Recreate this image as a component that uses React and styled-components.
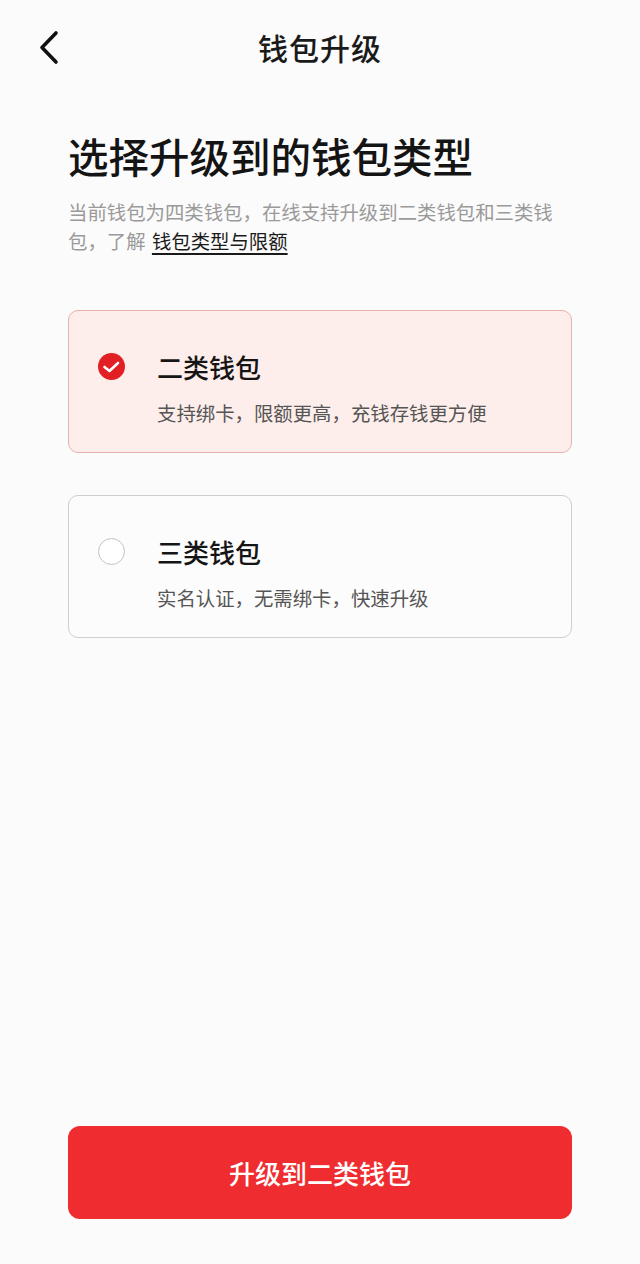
import React from "react";
import styled, { createGlobalStyle } from "styled-components";

const GlobalStyle = createGlobalStyle`
  html, body {
    margin: 0;
    padding: 0;
    background: #fcfbfb;
  }
  body {
    font-family: "Noto Sans CJK SC", "Noto Sans", sans-serif;
  }
`;

const options = [
  { id: 2, title: "二类钱包", desc: "支持绑卡，限额更高，充钱存钱更方便" },
  { id: 3, title: "三类钱包", desc: "实名认证，无需绑卡，快速升级" },
];

function App() {
  const selected = 2;
  return (
    <Root>
      <GlobalStyle />
      <Header>
        <BackButton>
          <svg width="24" height="36" viewBox="0 0 24 36" fill="none">
            <path d="M19 3 L5 17.5 L19 32" stroke="#111" strokeWidth="3.6" strokeLinecap="round" strokeLinejoin="round" />
          </svg>
        </BackButton>
        <HeaderTitle>钱包升级</HeaderTitle>
      </Header>
      <Content>
        <Heading>选择升级到的钱包类型</Heading>
        <Intro>
          当前钱包为四类钱包，在线支持升级到二类钱包和三类钱包，了解 <IntroLink>钱包类型与限额</IntroLink>
        </Intro>
        <OptionList>
          {options.map((o) => (
            <OptionCard key={o.id} $active={o.id === selected}>
              <Radio $active={o.id === selected}>
                {o.id === selected && (
                  <svg width="27" height="27" viewBox="0 0 27 27" fill="none">
                    <path d="M6.5 14 L11.5 18 L20 10" stroke="#fff" strokeWidth="2.6" strokeLinecap="round" strokeLinejoin="round" />
                  </svg>
                )}
              </Radio>
              <OptionText>
                <OptionTitle>{o.title}</OptionTitle>
                <OptionDesc>{o.desc}</OptionDesc>
              </OptionText>
            </OptionCard>
          ))}
        </OptionList>
      </Content>
      <Footer>
        <PrimaryButton>升级到二类钱包</PrimaryButton>
      </Footer>
    </Root>
  );
}

const Root = styled.div`
  display: flex;
  flex-direction: column;
  min-height: 1264px;
  width: 640px;
  background: #fcfbfb;
`;

const Header = styled.div`
  position: relative;
  height: 94px;
  display: flex;
  align-items: center;
  justify-content: center;
`;

const BackButton = styled.div`
  position: absolute;
  left: 37px;
  top: 30px;
  display: flex;
`;

const HeaderTitle = styled.div`
  font-size: 30px;
  font-weight: 500;
  color: #1a1a1a;
  letter-spacing: 1px;
`;

const Content = styled.div`
  display: flex;
  flex-direction: column;
  padding: 36px 68px 0 68px;
`;

const Heading = styled.h1`
  margin: 0;
  font-size: 40.5px;
  line-height: 52px;
  font-weight: 500;
  color: #141414;
`;

const Intro = styled.p`
  margin: 15px 0 0 0;
  font-size: 19.4px;
  line-height: 29px;
  color: #9a9a9a;
`;

const IntroLink = styled.span`
  margin-left: 2px;
  color: #1a1a1a;
  text-decoration: underline;
  text-underline-offset: 4px;
  text-decoration-thickness: 1.5px;
`;

const OptionList = styled.div`
  display: flex;
  flex-direction: column;
  gap: 42px;
  margin-top: 55px;
`;

const OptionCard = styled.div`
  height: 143px;
  box-sizing: border-box;
  border-radius: 10px;
  border: 1.5px solid ${(p) => (p.$active ? "#e5b1ae" : "#cfcdcd")};
  background: ${(p) => (p.$active ? "#fdeeeb" : "#fdfcfc")};
  display: flex;
  align-items: flex-start;
  padding: 41px 0 0 29px;
`;

const Radio = styled.div`
  width: 27px;
  height: 27px;
  box-sizing: border-box;
  border-radius: 50%;
  flex-shrink: 0;
  margin-top: 1px;
  display: flex;
  align-items: center;
  justify-content: center;
  background: ${(p) => (p.$active ? "#e11f24" : "#ffffff")};
  border: ${(p) => (p.$active ? "none" : "1.5px solid #c4c2c2")};
`;

const OptionText = styled.div`
  display: flex;
  flex-direction: column;
  margin-left: 32px;
`;

const OptionTitle = styled.div`
  font-size: 26px;
  line-height: 30px;
  font-weight: 500;
  color: #151515;
`;

const OptionDesc = styled.div`
  margin-top: 18px;
  font-size: 19.4px;
  line-height: 26px;
  color: #555;
`;

const Footer = styled.div`
  margin-top: auto;
  padding: 0 68px 45px 68px;
`;

const PrimaryButton = styled.button`
  display: block;
  width: 100%;
  height: 93px;
  border: none;
  border-radius: 12px;
  background: #ef2d31;
  color: #fff;
  font-family: "Noto Sans CJK SC", "Noto Sans", sans-serif;
  font-size: 26px;
  font-weight: 500;
`;

export default App;
